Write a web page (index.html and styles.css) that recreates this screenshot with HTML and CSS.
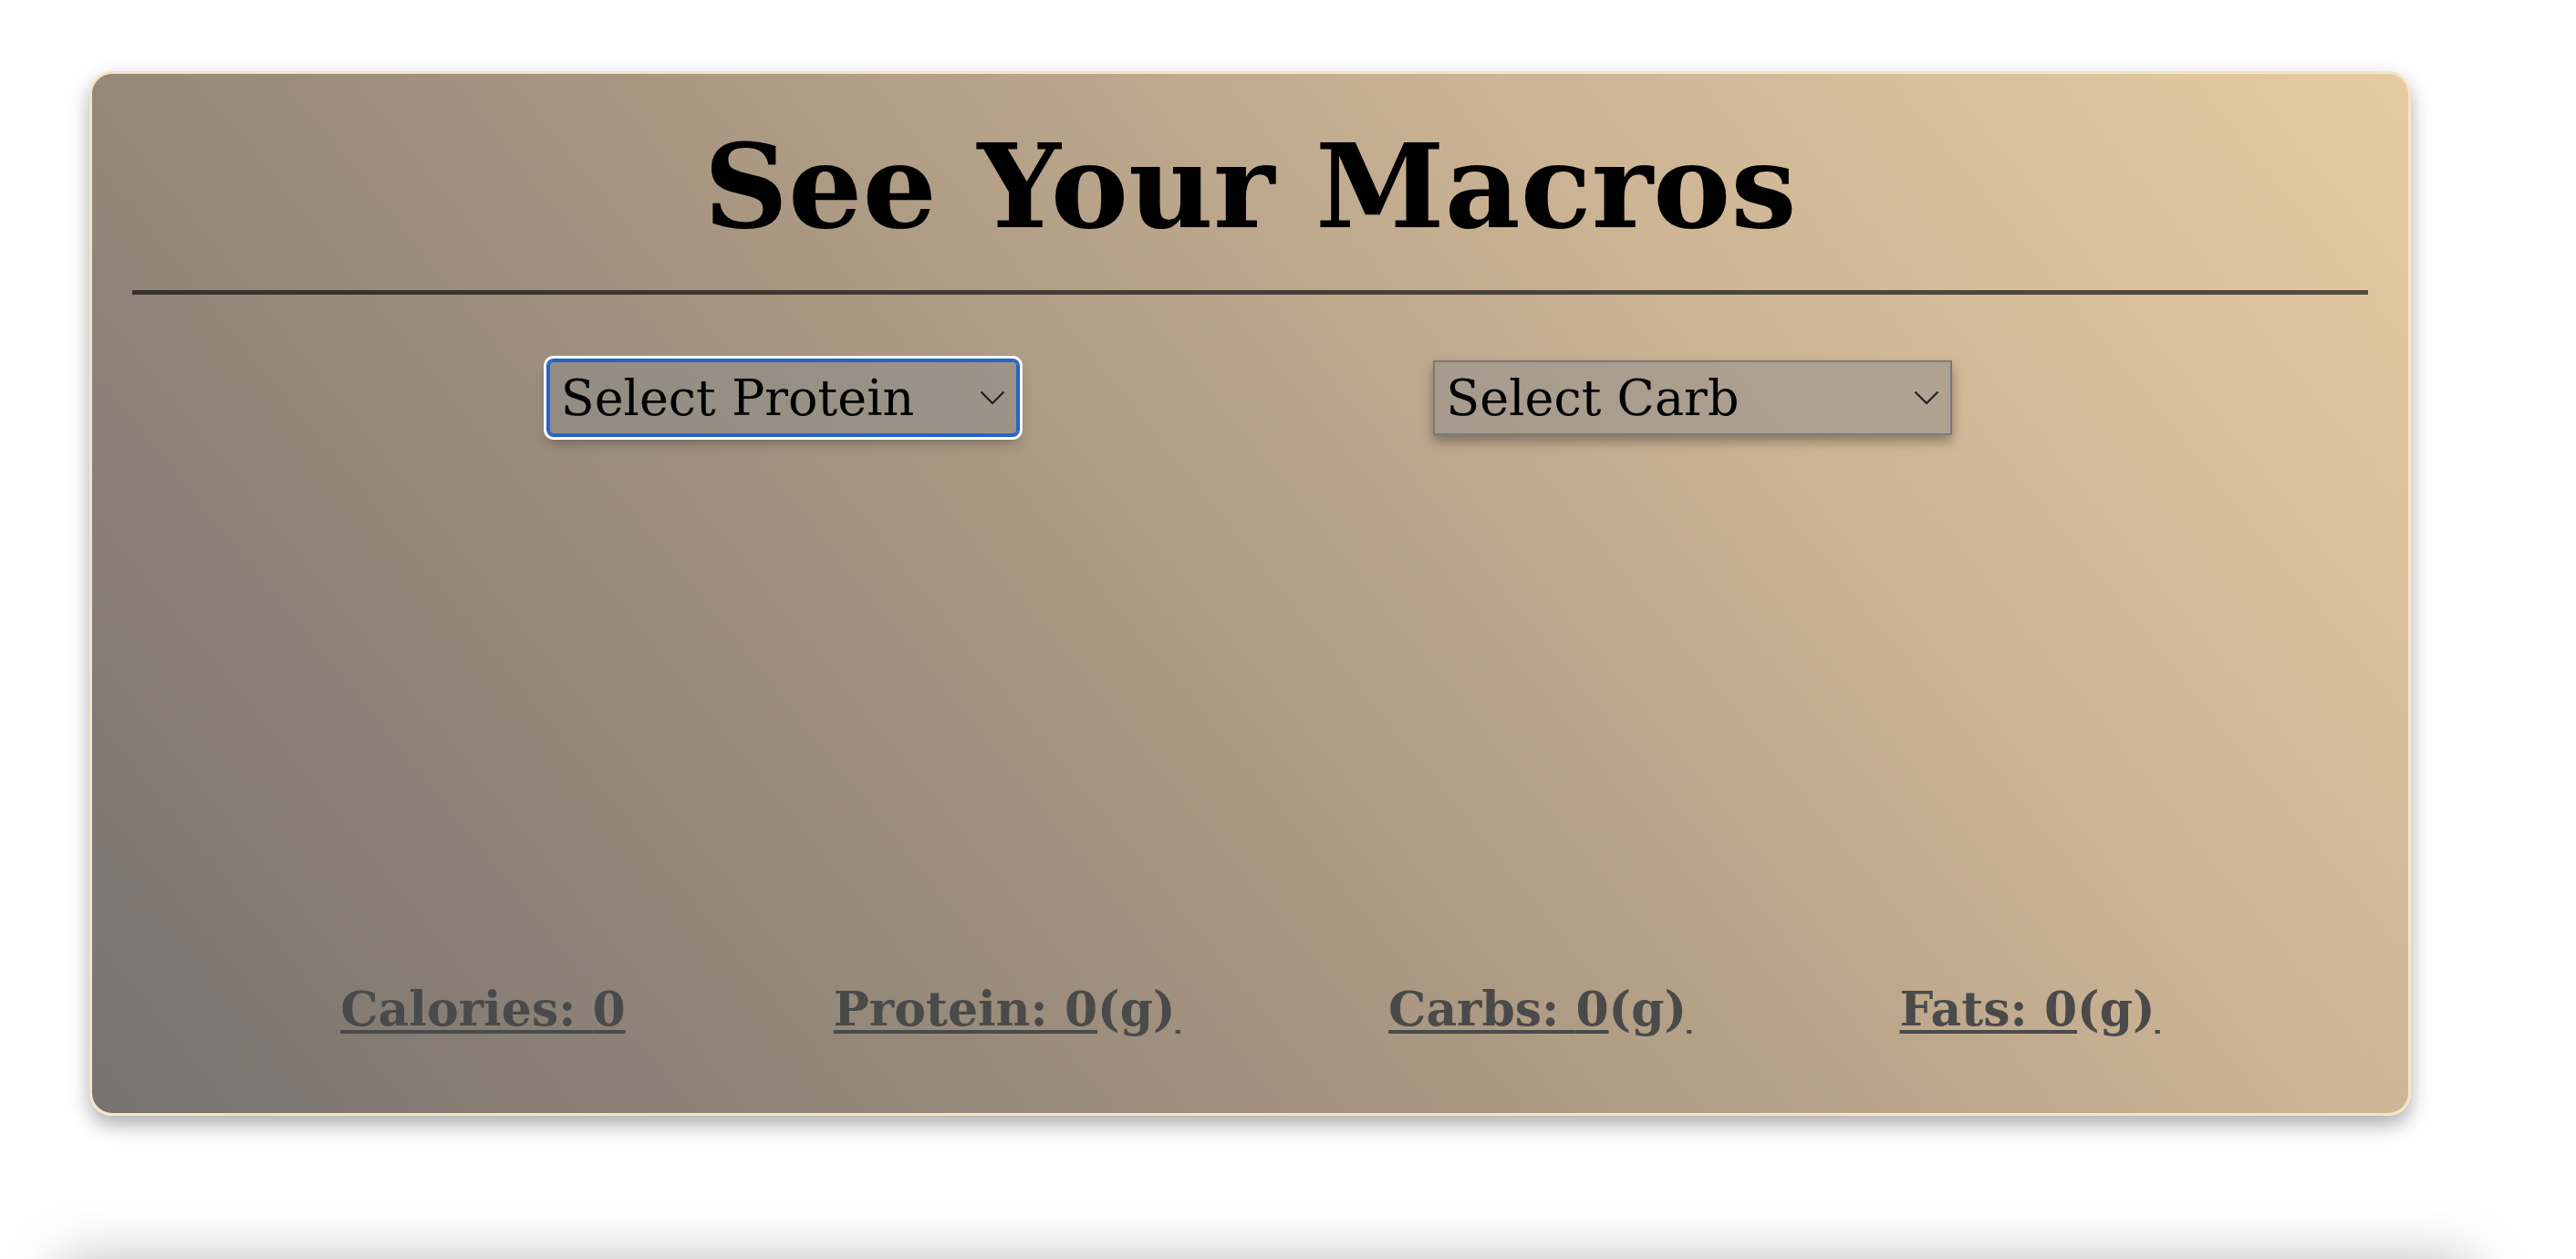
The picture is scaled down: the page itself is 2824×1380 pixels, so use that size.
FILE: index.html
```html
<!DOCTYPE html>
<html lang="en">
<head>
<meta charset="utf-8">
<title>See Your Macros</title>
<link rel="stylesheet" href="styles.css">
</head>
<body>
<main class="card">
  <h1 class="title">See Your Macros</h1>
  <hr class="rule">
  <div class="selectors">
    <div class="select-wrap protein">
      <select class="picker focused">
        <option>Select Protein</option>
        <option>Chicken</option>
        <option>Beef</option>
        <option>Salmon</option>
      </select>
      <svg class="chev" viewBox="0 0 28 16" aria-hidden="true"><path d="M1.5 1.5 L14 14 L26.5 1.5" fill="none" stroke="#1c1c1c" stroke-width="2"/></svg>
    </div>
    <div class="select-wrap carb">
      <select class="picker">
        <option>Select Carb</option>
        <option>Rice</option>
        <option>Potato</option>
        <option>Pasta</option>
      </select>
      <svg class="chev" viewBox="0 0 28 16" aria-hidden="true"><path d="M1.5 1.5 L14 14 L26.5 1.5" fill="none" stroke="#1c1c1c" stroke-width="2"/></svg>
    </div>
  </div>
  <div class="plate"></div>
  <div class="macros">
    <h3 class="macro"><u>Calories: </u><u>0</u></h3>
    <h3 class="macro"><u>Protein: </u><u>0</u>(g)<u>&#8202;</u></h3>
    <h3 class="macro"><u>Carbs: </u><u>0</u>(g)<u>&#8202;</u></h3>
    <h3 class="macro"><u>Fats: </u><u>0</u>(g)<u>&#8202;</u></h3>
  </div>
</main>
<div class="below"></div>
</body>
</html>
```

FILE: styles.css
```css
html, body {
  margin: 0;
  padding: 0;
  background: #ffffff;
}

body {
  padding: 78px 0 0 98px;
  font-family: "DejaVu Serif", "Liberation Serif", serif;
  overflow: hidden;
  height: 1380px;
  box-sizing: border-box;
}

.card {
  box-sizing: border-box;
  width: 2545px;
  height: 1145px;
  border: 3px solid #f4e4c9;
  border-radius: 25px;
  background: linear-gradient(51deg, #78726f 0%, #a4937f 40%, #cdb595 72%, #e6cba2 100%);
  box-shadow: 0 10px 22px rgba(0, 0, 0, 0.32);
  padding: 0 44px;
  display: flex;
  flex-direction: column;
}

.title {
  margin: 0;
  padding-top: 58px;
  text-align: center;
  font-size: 128px;
  line-height: 130px;
  font-weight: bold;
  color: #000;
}

.rule {
  margin: 49px 0 0 0;
  border: 0;
  height: 5px;
  background: rgba(0, 0, 0, 0.62);
}

.selectors {
  margin-top: 72px;
  display: flex;
  justify-content: space-evenly;
  align-items: center;
}

.select-wrap {
  position: relative;
  display: flex;
}

.picker {
  appearance: none;
  -webkit-appearance: none;
  box-sizing: border-box;
  height: 82px;
  margin: 0;
  padding: 0 50px 0 12px;
  font-family: "DejaVu Serif", "Liberation Serif", serif;
  font-size: 54px;
  color: #000;
  background: rgba(140, 140, 140, 0.5);
  border: 2px solid #7a7a7a;
  border-radius: 0;
  box-shadow: 0 7px 12px rgba(0, 0, 0, 0.33);
  outline: none;
}

.protein .picker {
  width: 515px;
}

.carb .picker {
  width: 569px;
}

.picker.focused {
  border-color: #2563c9;
  border-radius: 6px;
  box-shadow: 0 0 0 2px #2563c9, 0 0 0 5px #ffffff, 0 8px 14px rgba(0, 0, 0, 0.3);
}

.chev {
  position: absolute;
  right: 14px;
  top: 33px;
  width: 28px;
  height: 16px;
  pointer-events: none;
}

.plate {
  flex: 1;
}

.macros {
  display: flex;
  justify-content: space-evenly;
  align-items: baseline;
  padding-bottom: 84px;
}

.macro {
  margin: 0;
  font-size: 52px;
  line-height: 60px;
  font-weight: bold;
  color: #4a4a4a;
}

.macro u {
  text-decoration: underline;
  text-decoration-thickness: 4px;
  text-underline-offset: 5px;
}

.below {
  margin-top: 160px;
  margin-left: -30px;
  width: 2640px;
  height: 200px;
  background: #ffffff;
  box-shadow: 0 0 60px rgba(0, 0, 0, 0.28);
}
```
